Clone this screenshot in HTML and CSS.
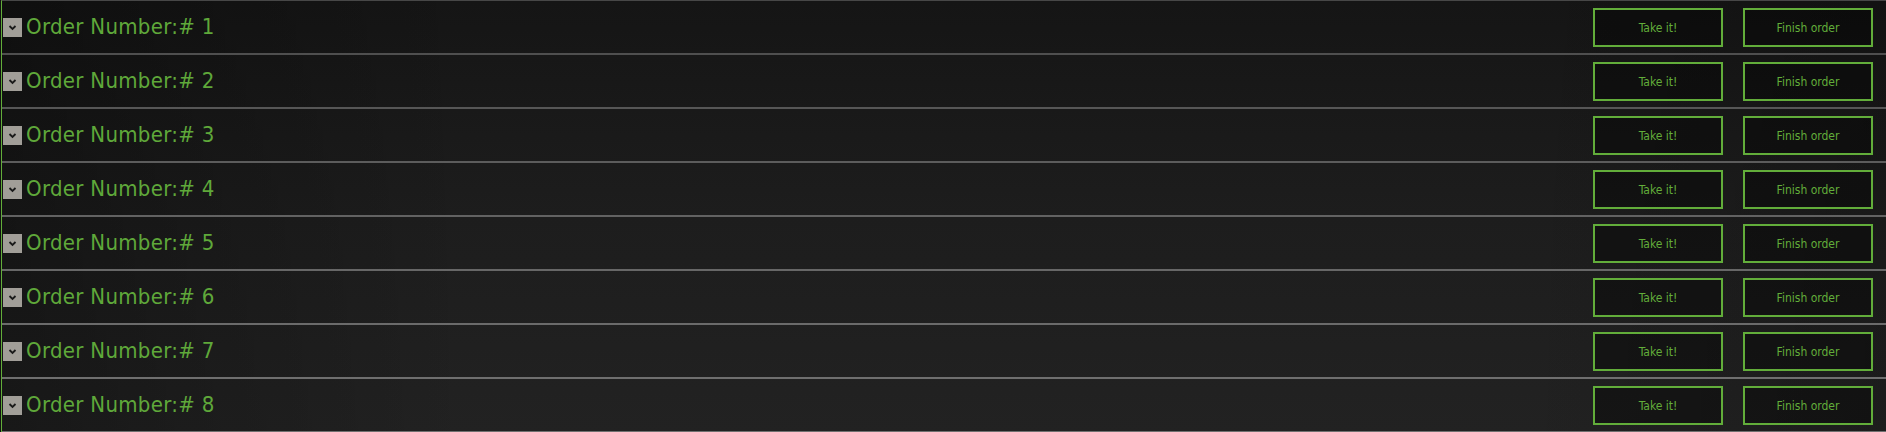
FILE: index.html
```html
<!DOCTYPE html>
<html>
<head>
<meta charset="utf-8">
<link rel="stylesheet" href="styles.css">
</head>
<body>
<div class="orders">
  <div class="order r1">
    <span class="toggle"><svg width="19" height="19" viewBox="0 0 19 19"><polyline points="6.5,8 9.5,11 12.5,8" fill="none" stroke="#1a1a1a" stroke-width="1.8"/></svg></span>
    <span class="title">Order Number:# 1</span>
    <div class="actions"><button class="btn">Take it!</button><button class="btn">Finish order</button></div>
  </div>
  <div class="order r2">
    <span class="toggle"><svg width="19" height="19" viewBox="0 0 19 19"><polyline points="6.5,8 9.5,11 12.5,8" fill="none" stroke="#1a1a1a" stroke-width="1.8"/></svg></span>
    <span class="title">Order Number:# 2</span>
    <div class="actions"><button class="btn">Take it!</button><button class="btn">Finish order</button></div>
  </div>
  <div class="order r3">
    <span class="toggle"><svg width="19" height="19" viewBox="0 0 19 19"><polyline points="6.5,8 9.5,11 12.5,8" fill="none" stroke="#1a1a1a" stroke-width="1.8"/></svg></span>
    <span class="title">Order Number:# 3</span>
    <div class="actions"><button class="btn">Take it!</button><button class="btn">Finish order</button></div>
  </div>
  <div class="order r4">
    <span class="toggle"><svg width="19" height="19" viewBox="0 0 19 19"><polyline points="6.5,8 9.5,11 12.5,8" fill="none" stroke="#1a1a1a" stroke-width="1.8"/></svg></span>
    <span class="title">Order Number:# 4</span>
    <div class="actions"><button class="btn">Take it!</button><button class="btn">Finish order</button></div>
  </div>
  <div class="order r5">
    <span class="toggle"><svg width="19" height="19" viewBox="0 0 19 19"><polyline points="6.5,8 9.5,11 12.5,8" fill="none" stroke="#1a1a1a" stroke-width="1.8"/></svg></span>
    <span class="title">Order Number:# 5</span>
    <div class="actions"><button class="btn">Take it!</button><button class="btn">Finish order</button></div>
  </div>
  <div class="order r6">
    <span class="toggle"><svg width="19" height="19" viewBox="0 0 19 19"><polyline points="6.5,8 9.5,11 12.5,8" fill="none" stroke="#1a1a1a" stroke-width="1.8"/></svg></span>
    <span class="title">Order Number:# 6</span>
    <div class="actions"><button class="btn">Take it!</button><button class="btn">Finish order</button></div>
  </div>
  <div class="order r7">
    <span class="toggle"><svg width="19" height="19" viewBox="0 0 19 19"><polyline points="6.5,8 9.5,11 12.5,8" fill="none" stroke="#1a1a1a" stroke-width="1.8"/></svg></span>
    <span class="title">Order Number:# 7</span>
    <div class="actions"><button class="btn">Take it!</button><button class="btn">Finish order</button></div>
  </div>
  <div class="order r8">
    <span class="toggle"><svg width="19" height="19" viewBox="0 0 19 19"><polyline points="6.5,8 9.5,11 12.5,8" fill="none" stroke="#1a1a1a" stroke-width="1.8"/></svg></span>
    <span class="title">Order Number:# 8</span>
    <div class="actions"><button class="btn">Take it!</button><button class="btn">Finish order</button></div>
  </div>
</div>
</body>
</html>
```

FILE: styles.css
```css
html, body {
  margin: 0;
  padding: 0;
  height: 432px;
  overflow: hidden;
  background: #111;
}
.orders {
  margin-left: 1px;
  border-left: 1px solid #62ad3a;
  border-top: 1px solid #474747;
  background: linear-gradient(180deg, #151515 0%, #1d1d1d 50%, #222 100%);
  font-family: "DejaVu Sans Condensed", "DejaVu Sans", sans-serif;
}
.order {
  display: flex;
  align-items: center;
  height: 52px;
  border-bottom: 2px solid #555;
  padding-left: 1px;
  background: linear-gradient(90deg, rgba(0,0,0,0.3) 0%, rgba(0,0,0,0) 25%, rgba(0,0,0,0) 80%, rgba(0,0,0,0.15) 100%);
}
.r1 { border-bottom-color: #4f4f4f; }
.r2 { border-bottom-color: #565656; }
.r3 { border-bottom-color: #5c5c5c; }
.r4 { border-bottom-color: #626262; }
.r5 { border-bottom-color: #676767; }
.r6 { border-bottom-color: #6b6b6b; }
.r7 { border-bottom-color: #6f6f6f; }
.r8 { border-bottom-color: #707070; }
.toggle {
  width: 19px;
  height: 19px;
  background: #a19e98;
  display: flex;
}
.title {
  margin-left: 4px;
  color: #5fa83a;
  font-size: 22px;
  letter-spacing: 0.3px;
  line-height: 1;
  flex: 1;
}
.actions {
  display: flex;
  gap: 20px;
  margin-right: 13px;
}
.btn {
  width: 130px;
  height: 39px;
  border: 2px solid #62ad3a;
  background: rgba(0,0,0,0.35);
  color: #62ad3a;
  font-family: "DejaVu Sans Condensed", "DejaVu Sans", sans-serif;
  font-size: 12px;
  padding: 2px 0 0 0;
}
```
